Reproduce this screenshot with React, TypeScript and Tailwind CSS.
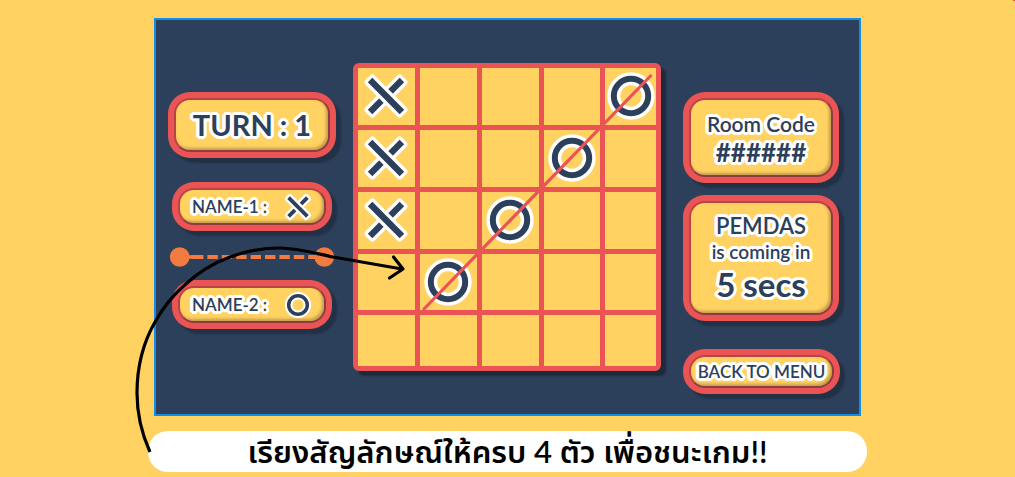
import type { ReactNode } from 'react';

const outlined =
  '[text-shadow:3px_0_white,-3px_0_white,0_3px_white,0_-3px_white,2px_2px_white,-2px_2px_white,2px_-2px_white,-2px_-2px_white,1px_3px_white,-1px_3px_white,1px_-3px_white,-1px_-3px_white,3px_1px_white,3px_-1px_white,-3px_1px_white,-3px_-1px_white,1px_0_white,-1px_0_white]';

function Cross({ className, outline }: { className: string; outline: number }) {
  const bar = { x: -22.5, y: -3.2, width: 45, height: 6.4, fill: '#2d405b', stroke: '#fff', strokeWidth: outline, strokeLinejoin: 'round' as const, paintOrder: 'stroke' };
  return (
    <svg viewBox="-22 -22 44 44" className={className} overflow="visible" role="img" aria-label="X">
      <rect {...bar} transform="rotate(-45)" />
      <rect {...bar} transform="rotate(45)" />
    </svg>
  );
}

function Nought({ className, ring, outline }: { className: string; ring: number; outline: number }) {
  return (
    <svg viewBox="-24 -24 48 48" className={className} overflow="visible" role="img" aria-label="O">
      <circle r="17.2" fill="none" stroke="#fff" strokeWidth={outline} />
      <circle r="17.2" fill="none" stroke="#2d405b" strokeWidth={ring} />
    </svg>
  );
}

const frameStyle = 'flex rounded-[22px] bg-[#ea5455] p-[6px] shadow-[5px_5px_2px_#223145]';
const faceStyle =
  'flex flex-1 rounded-[16px] border-2 border-t-[#b94446] border-l-[#b94446] border-r-[#8f3b40] border-b-[#8f3b40] bg-[#ffd261] shadow-[inset_-2px_-2px_3px_#c49c4e]';

function Panel({ className, children }: { className: string; children: ReactNode }) {
  return (
    <div className={`${frameStyle} ${className}`}>
      <div className={`${faceStyle} flex-col items-center justify-center`}>{children}</div>
    </div>
  );
}

function Player({ name, children }: { name: string; children: ReactNode }) {
  return (
    <div className={`${frameStyle} mx-1 h-[49px]`}>
      <div className={`${faceStyle} items-center justify-between pr-[13px] pl-[12px]`}>
        <span className={`text-[17px] font-semibold ${outlined}`}>{name}</span>
        {children}
      </div>
    </div>
  );
}

const board = ['X...O', 'X..O.', 'X.O..', '.O...', '.....'];

function Board() {
  return (
    <div className="relative w-[308px]">
      <div className="grid aspect-square grid-cols-[9fr_9fr_9fr_9fr_8fr] grid-rows-[9fr_9fr_9fr_9fr_8fr] gap-[5px] rounded-[6px] border-[5px] border-[#ea5455] bg-[#ea5455] shadow-[5px_5px_2px_#1e2a3b]">
        {board.flatMap((row, r) =>
          row.split('').map((mark, c) => (
            <div key={`${r}-${c}`} className="flex min-h-0 min-w-0 items-center justify-center bg-[#ffd261]">
              {mark === 'X' && <Cross className="size-[44px]" outline={6.6} />}
              {mark === 'O' && <Nought className="size-[48px]" ring={6} outline={13} />}
            </div>
          )),
        )}
      </div>
      <svg viewBox="0 0 308 308" className="absolute inset-0 size-full" aria-hidden="true">
        <path d="M71 246L297.500 13" stroke="#ea5455" strokeWidth="3.200" strokeLinecap="round" />
      </svg>
    </div>
  );
}

export default function App() {
  return (
    <main className="relative min-h-screen bg-[#ffd261] px-[148px] pt-[18px] pb-[5px] font-[Lato,'Noto_Sans_Thai','Noto_Sans',sans-serif] text-[#2d405b]">
      <div className="absolute top-0 right-0 h-px w-[2px] bg-[#ea5455]" />
      <div className="relative">
        <section className="mx-[6px] flex items-start justify-center border-2 border-[#118bec] bg-[#2d405b] pt-[43px] pr-[7px] pb-[20px]">
          <div className="mt-[29px] mr-[17px] flex w-[168px] flex-col">
            <Panel className="h-[66px]">
              <h1 className={`text-[29px] font-bold ${outlined}`}>TURN : 1</h1>
            </Panel>
            <div className="mt-[24px]">
              <Player name="NAME-1 :">
                <Cross className="size-[26px]" outline={8} />
              </Player>
            </div>
            <svg viewBox="0 0 168 20" className="mt-[16px] mb-[13px] h-[20px]" aria-hidden="true">
              <path d="M25 10H147" stroke="#f27b3f" strokeWidth="3.800" strokeDasharray="10.400 4" strokeDashoffset="14.400" />
              <path d="M20 10H27" stroke="#f27b3f" strokeWidth="3.800" />
              <circle cx="11.700" cy="10" r="9.800" fill="#f27b3f" />
              <circle cx="156.300" cy="10" r="9.800" fill="#f27b3f" />
            </svg>
            <Player name="NAME-2 :">
              <Nought className="size-[26px]" ring={6.5} outline={14} />
            </Player>
          </div>
          <Board />
          <div className="mt-[29px] ml-[22px] flex w-[157px] flex-col">
            <Panel className="mr-px h-[91px]">
              <p className={`text-[21px] leading-[28px] font-semibold ${outlined}`}>Room Code</p>
              <p className={`text-[26px] leading-[28px] font-bold ${outlined}`}>######</p>
            </Panel>
            <Panel className="mt-[12px] mr-px h-[126px]">
              <p className={`text-[22px] leading-[28px] font-semibold ${outlined}`}>PEMDAS</p>
              <p className={`text-[19px] leading-[24px] font-semibold ${outlined}`}>is coming in</p>
              <p className={`text-[33px] leading-[40px] font-bold ${outlined}`}>5 secs</p>
            </Panel>
            <button type="button" className={`${frameStyle} mt-[28px] h-[45px]`}>
              <span className={`${faceStyle} h-full items-center justify-center text-[17px] font-semibold whitespace-nowrap ${outlined}`}>
                BACK TO MENU
              </span>
            </button>
          </div>
        </section>
        <p className="mt-[15px] flex h-[41px] items-center justify-center rounded-[20px] bg-white text-[31px] leading-[41px] font-semibold whitespace-nowrap text-black">
          เรียงสัญลักษณ์ให้ครบ 4 ตัว เพื่อชนะเกม!!
        </p>
        <svg viewBox="130 240 280 220" className="absolute top-[222px] -left-[18px] h-[220px] w-[280px]" fill="none" stroke="#000" strokeWidth="3.200" aria-hidden="true">
          <path d="M150 452C140 430 137 412 137 393C137 367 143 343 155 322C164 306 175 293 187 283C199 272 214 263 230 257C246 251 262 248 280 248C296 248 314 253 333 257L402 269" />
          <path d="M393.500 257L403 269L389.500 278" strokeLinecap="round" strokeLinejoin="round" />
        </svg>
      </div>
    </main>
  );
}
